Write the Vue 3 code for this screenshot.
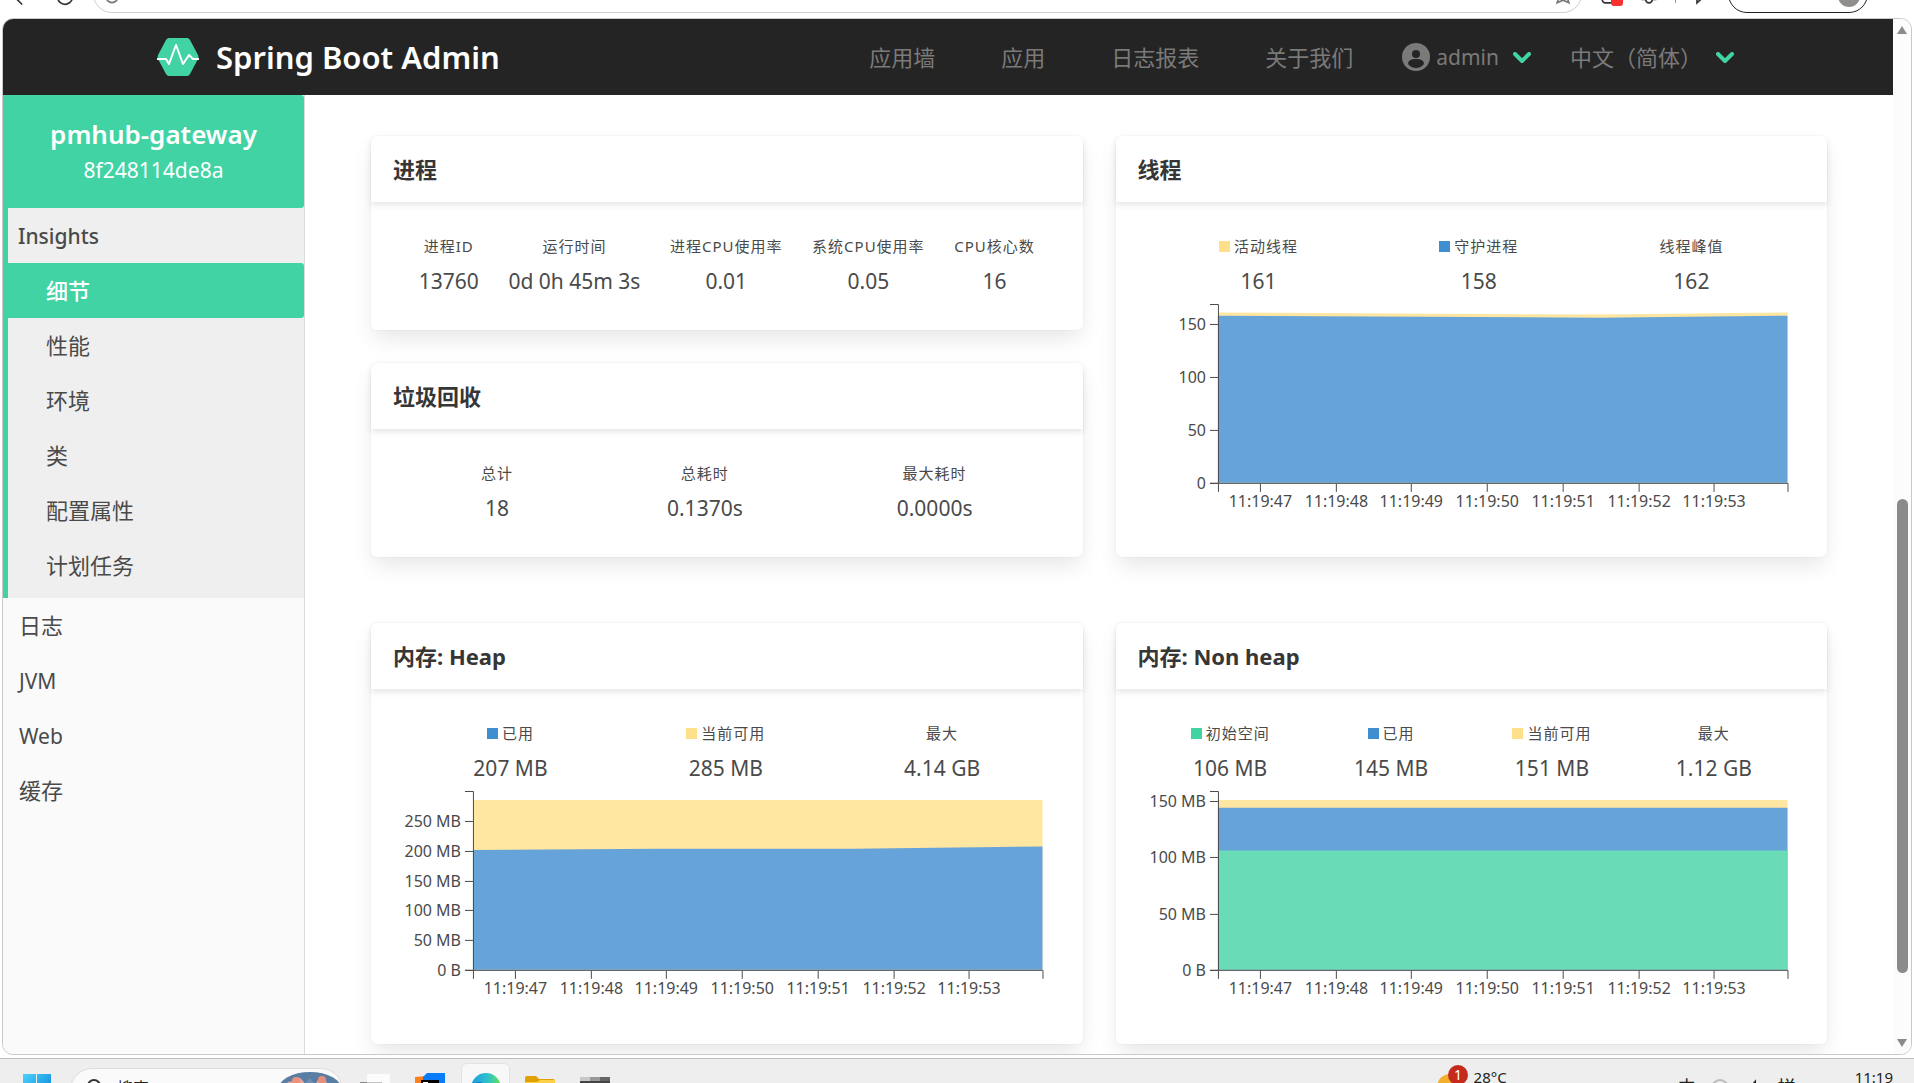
<template>
  <div class="desktop">
    <!-- Browser toolbar -->
    <div class="browser-bar">
      <svg class="bar-icon back" viewBox="0 0 24 24"><path d="M21 12H3M11 3l-9 9 9 9" /></svg>
      <svg class="bar-icon reload" viewBox="0 0 24 24"><path d="M21 6v6a9 9 0 1 1-3-7" /></svg>
      <div class="address">
        <svg class="bar-icon info" viewBox="0 0 24 24"><circle cx="12" cy="13" r="7" /></svg>
        <svg class="bar-icon star" viewBox="0 0 24 24"><path d="M12 2l3 6 6 1-4 5 2 6-7-3-7 3 2-6-4-5 6-1z" /></svg>
      </div>
      <div class="extension">
        <svg class="bar-icon" viewBox="0 0 24 24"><path d="M16 19H9a4 4 0 0 1-4-4V7" /></svg>
        <span class="ext-badge"></span>
      </div>
      <svg class="bar-icon" viewBox="0 0 24 24"><path d="M3 15h5a4 4 0 0 0 8 0h5" /></svg>
      <span class="bar-divider"></span>
      <svg class="bar-icon" viewBox="0 0 24 24"><path d="M6 3v16l10-9" /></svg>
      <div class="profile"><span class="profile-avatar"></span></div>
    </div>

    <div class="window">
      <div class="page">
        <!-- Top navigation -->
        <header class="navbar">
          <a class="brand" href="#">
            <svg class="logo" viewBox="0 0 44 40">
              <path d="M13 1h18q2 0 3 2l8 15q1 2 0 4l-8 15q-1 2-3 2H13q-2 0-3-2L2 22q-1-2 0-4l8-15q1-2 3-2z" fill="#42d3a5" />
              <path d="M1 22h9l3 5 7-19 7 19 6-9 4 4h6" fill="none" stroke="#fff" stroke-width="2" stroke-linejoin="round" />
            </svg>
            <span class="brand-name">Spring Boot Admin</span>
          </a>
          <nav class="nav-links">
            <a v-for="link in navLinks" :key="link" href="#">{{ link }}</a>
          </nav>
          <div class="nav-menus">
            <button class="nav-menu" type="button">
              <svg class="user-icon" viewBox="0 0 28 28">
                <circle cx="14" cy="14" r="14" fill="#7a7a7a" />
                <circle cx="14" cy="11" r="4" fill="#242424" />
                <path d="M6 21q0-5 8-5t8 5q-3 4-8 4t-8-4z" fill="#242424" />
              </svg>
              <span class="user-name">admin</span>
              <svg class="chevron" viewBox="0 0 18 12"><path d="M2 2l7 7 7-7" /></svg>
            </button>
            <button class="nav-menu" type="button">
              <span class="language">中文（简体）</span>
              <svg class="chevron" viewBox="0 0 18 12"><path d="M2 2l7 7 7-7" /></svg>
            </button>
          </div>
        </header>

        <div class="body">
          <!-- Sidebar -->
          <aside class="sidebar">
            <div class="instance">
              <div class="instance-name">pmhub-gateway</div>
              <div class="instance-id">8f248114de8a</div>
            </div>
            <div class="group">
              <a class="item latin strong" href="#">Insights</a>
              <a
                v-for="item in insights"
                :key="item"
                href="#"
                :class="['item', 'sub', { active: item === activeItem }]"
              >{{ item }}</a>
            </div>
            <a
              v-for="item in sections"
              :key="item.name"
              href="#"
              :class="['item', { latin: item.latin }]"
            >{{ item.name }}</a>
          </aside>

          <!-- Detail cards -->
          <main class="content">
            <div class="row">
              <div class="column">
                <section v-for="card in plainCards" :key="card.title" class="card">
                  <h2 class="card-header">{{ card.title }}</h2>
                  <div class="card-body">
                    <dl class="level">
                      <div v-for="stat in card.stats" :key="stat.label" class="stat">
                        <dt>{{ stat.label }}</dt>
                        <dd>{{ stat.value }}</dd>
                      </div>
                    </dl>
                  </div>
                </section>
              </div>
              <div v-for="card in chartCards" :key="card.title" class="column">
                <section class="card">
                  <h2 class="card-header">{{ card.title }}</h2>
                  <div class="card-body">
                    <dl class="level">
                      <div v-for="stat in card.stats" :key="stat.label" class="stat">
                        <dt><span v-if="stat.color" :class="['bullet', stat.color]"></span>{{ stat.label }}</dt>
                        <dd>{{ stat.value }}</dd>
                      </div>
                    </dl>
                    <svg class="chart" viewBox="0 0 646 216">
                      <path
                        v-for="area in card.areas"
                        :key="area.color"
                        :class="['area', area.color]"
                        :d="areaPath(area.values, card.max)"
                      />
                      <path class="axis" d="M61 4.500H69.500V183.500H61" />
                      <path class="axis" d="M69.500 192V183.500H639.500V192" />
                      <g v-for="tick in card.ticks" :key="tick.label">
                        <path class="axis" :d="`M61 ${yPos(tick.value, card.max)}H69`" />
                        <text class="tick" x="57" :y="yPos(tick.value, card.max) + 6" text-anchor="end">{{ tick.label }}</text>
                      </g>
                      <g v-for="(time, index) in times" :key="time">
                        <path class="axis" :d="`M${xPos(index)} 184V192`" />
                        <text class="tick" :x="xPos(index)" y="207" text-anchor="middle">{{ time }}</text>
                      </g>
                    </svg>
                  </div>
                </section>
              </div>
            </div>
          </main>
        </div>
      </div>

      <!-- Page scrollbar -->
      <div class="scrollbar">
        <svg class="scroll-arrow" viewBox="0 0 10 8"><path d="M5 0l5 8H0z" /></svg>
        <div class="track">
          <div :style="{ flexGrow: scroll.before }"></div>
          <div class="thumb" :style="{ flexGrow: scroll.size }"></div>
          <div :style="{ flexGrow: scroll.after }"></div>
        </div>
        <svg class="scroll-arrow" viewBox="0 0 10 8"><path d="M5 8l5-8H0z" /></svg>
      </div>
    </div>

    <!-- Taskbar -->
    <footer class="taskbar">
      <svg class="app start" viewBox="0 0 30 30">
        <defs>
          <linearGradient id="start-fill" x2="1" y2="1">
            <stop offset="0" stop-color="#4cd3fb" />
            <stop offset="1" stop-color="#0078d4" />
          </linearGradient>
        </defs>
        <path d="M1 1h13v13H1zM15 1h14v13H15zM1 15h13v14H1zM15 15h14v14H15z" fill="url(#start-fill)" />
      </svg>
      <div class="search">
        <svg class="search-icon" viewBox="0 0 20 20"><circle cx="9" cy="8" r="6" /><path d="M13 13l5 5" /></svg>
        <span class="search-text">搜索</span>
        <svg class="search-art" viewBox="0 0 64 32">
          <ellipse cx="32" cy="18" rx="32" ry="18" fill="#5a7da3" />
          <path d="M2 16q8-8 14-6 4-8 8-2 4 2 0 8 10-3 14 2-1-10 5-12 6 0 6 8 8-2 13 6v14H2z" fill="#e8a898" />
          <circle cx="18" cy="9" r="4" fill="#e9937c" />
          <circle cx="44" cy="8" r="4" fill="#e58f7a" />
          <path d="M26 12l6-6 8 10-14 2z" fill="#6f8fb0" />
        </svg>
      </div>
      <svg class="app" viewBox="0 0 30 30">
        <path d="M7 1h23v18H7z" fill="#fcfcfc" />
        <path d="M0 9h22v16H0z" fill="#8a8a8a" />
        <path d="M7 9h15v16H7z" fill="#c4c4c4" />
      </svg>
      <svg class="app" viewBox="0 0 30 30">
        <path d="M0 4l11-1-2 26H0z" fill="#fc801d" />
        <path d="M12 0h18v24l-6 6H8V4z" fill="#087cfa" />
        <path d="M6 7h18v18H6z" fill="#000" />
        <path d="M8 10h5M10 10v6M8 16h5M16 10v6h5" stroke="#fff" stroke-width="2" fill="none" />
      </svg>
      <div class="app-active">
        <svg class="app" viewBox="0 0 30 30">
          <defs>
            <linearGradient id="edge-fill" x2="1" y2="0">
              <stop offset="0" stop-color="#1b9de2" />
              <stop offset="0.600" stop-color="#30c3c8" />
              <stop offset="1" stop-color="#6be34a" />
            </linearGradient>
          </defs>
          <circle cx="15" cy="15" r="15" fill="url(#edge-fill)" />
          <path d="M1 14q5-9 14-2v17Q2 29 1 14z" fill="#0c72c4" />
        </svg>
      </div>
      <svg class="app" viewBox="0 0 30 30">
        <path d="M0 5q0-2 2-2h9l3 3h14q2 0 2 2v7H0z" fill="#e0a000" />
        <path d="M0 9h12l3-2h15v20H0z" fill="#fdd04a" />
      </svg>
      <svg class="app" viewBox="0 0 30 30">
        <path d="M0 4h10v5H0z" fill="#c8c8c8" />
        <path d="M10 4h10v5H10z" fill="#999" />
        <path d="M20 4h10v5H20z" fill="#666" />
        <path d="M0 8h30v18H0z" fill="#444" />
      </svg>
      <div class="weather">
        <svg class="weather-icon" viewBox="0 0 32 32">
          <circle cx="13" cy="22" r="13" fill="#f0b02c" />
          <circle cx="21" cy="10" r="10" fill="#c42b1c" />
          <text class="weather-count" x="21" y="15" text-anchor="middle">1</text>
        </svg>
        <span class="clock-text">28°C</span>
      </div>
      <div class="tray">
        <span class="tray-text">中</span>
        <svg class="tray-icon" viewBox="0 0 20 20"><circle cx="10" cy="10" r="8" fill="none" stroke="#bbb" stroke-width="2" /></svg>
        <svg class="tray-icon" viewBox="0 0 20 20"><path d="M7 9l4-5v13" fill="none" stroke="#222" stroke-width="2" /></svg>
        <span class="tray-text">拼</span>
      </div>
      <span class="clock-text">11:19</span>
    </footer>
  </div>
</template>

<script setup>
import { ref } from 'vue';

const navLinks = ['应用墙', '应用', '日志报表', '关于我们'];
const insights = ['细节', '性能', '环境', '类', '配置属性', '计划任务'];
const activeItem = ref('细节');

const sections = [
  { name: '日志' },
  { name: 'JVM', latin: true },
  { name: 'Web', latin: true },
  { name: '缓存' }
];

// Scroll position, as shares of the track
const scroll = { before: 462, size: 472, after: 64 };

const plainCards = [
  {
    title: '进程',
    stats: [
      { label: '进程ID', value: '13760' },
      { label: '运行时间', value: '0d 0h 45m 3s' },
      { label: '进程CPU使用率', value: '0.01' },
      { label: '系统CPU使用率', value: '0.05' },
      { label: 'CPU核心数', value: '16' }
    ]
  },
  {
    title: '垃圾回收',
    stats: [
      { label: '总计', value: '18' },
      { label: '总耗时', value: '0.1370s' },
      { label: '最大耗时', value: '0.0000s' }
    ]
  }
];

const chartCards = [
  {
    title: '线程',
    max: 169,
    stats: [
      { label: '活动线程', value: '161', color: 'yellow' },
      { label: '守护进程', value: '158', color: 'blue' },
      { label: '线程峰值', value: '162' }
    ],
    ticks: [
      { value: 0, label: '0' },
      { value: 50, label: '50' },
      { value: 100, label: '100' },
      { value: 150, label: '150' }
    ],
    areas: [
      { color: 'yellow', values: [[0, 161], [0.67, 159], [1, 161]] },
      { color: 'blue', values: [[0, 158], [0.67, 156], [1, 158]] }
    ]
  },
  {
    title: '内存: Heap',
    max: 300,
    stats: [
      { label: '已用', value: '207 MB', color: 'blue' },
      { label: '当前可用', value: '285 MB', color: 'yellow' },
      { label: '最大', value: '4.14 GB' }
    ],
    ticks: [
      { value: 0, label: '0 B' },
      { value: 50, label: '50 MB' },
      { value: 100, label: '100 MB' },
      { value: 150, label: '150 MB' },
      { value: 200, label: '200 MB' },
      { value: 250, label: '250 MB' }
    ],
    areas: [
      { color: 'yellow', values: [[0, 285], [1, 285]] },
      { color: 'blue', values: [[0, 201], [0.33, 203], [0.67, 203], [1, 207]] }
    ]
  },
  {
    title: '内存: Non heap',
    max: 159,
    stats: [
      { label: '初始空间', value: '106 MB', color: 'green' },
      { label: '已用', value: '145 MB', color: 'blue' },
      { label: '当前可用', value: '151 MB', color: 'yellow' },
      { label: '最大', value: '1.12 GB' }
    ],
    ticks: [
      { value: 0, label: '0 B' },
      { value: 50, label: '50 MB' },
      { value: 100, label: '100 MB' },
      { value: 150, label: '150 MB' }
    ],
    areas: [
      { color: 'yellow', values: [[0, 151], [1, 151]] },
      { color: 'blue', values: [[0, 144], [1, 144]] },
      { color: 'green', values: [[0, 106], [1, 106]] }
    ]
  }
];

const times = [47, 48, 49, 50, 51, 52, 53].map((second) => `11:19:${second}`);

// Plot area inside the chart's view box
const plot = { left: 69, width: 570, bottom: 183, height: 179 };

const yPos = (value, max) => Math.round(plot.bottom - (value / max) * plot.height) + 0.5;
const xPos = (index) => Math.round(111 + index * 75.7) + 0.5;

// Closed area from the baseline up to the given values
const areaPath = (values, max) => {
  const points = values.map(([x, value]) => {
    return `${plot.left + x * plot.width} ${plot.bottom - (value / max) * plot.height}`;
  });
  return `M${plot.left} ${plot.bottom}L${points.join('L')}V${plot.bottom}Z`;
};
</script>

<style>
body {
  background: #fff;
  overflow: hidden;
}
</style>

<style scoped>
* {
  box-sizing: border-box;
}

.desktop {
  height: 100vh;
  display: flex;
  flex-direction: column;
  font-family: "Noto Sans", "Noto Sans CJK SC", sans-serif;
  font-size: 22px;
  color: #4a4a4a;
}

a {
  color: inherit;
  text-decoration: none;
}

button {
  font: inherit;
  color: inherit;
  background: none;
  border: none;
  padding: 0;
}

/* Browser toolbar */
.browser-bar {
  height: 18px;
  flex: none;
  display: flex;
  align-items: flex-end;
  gap: 16px;
  padding: 0 46px 5px 13px;
  overflow: hidden;
}

.bar-icon {
  width: 20px;
  height: 20px;
  flex: none;
  margin-bottom: 6px;
  fill: none;
  stroke: #333;
  stroke-width: 2;
}

.back {
  margin-right: 6px;
}

.reload {
  margin-right: 2px;
}

.address {
  flex: 1;
  height: 38px;
  display: flex;
  align-items: flex-end;
  justify-content: space-between;
  padding: 0 8px;
  border: 1px solid #cfcfcf;
  border-radius: 19px;
}

.address .bar-icon {
  margin-bottom: 6px;
  stroke: #777;
}

.extension {
  display: flex;
  align-items: flex-end;
}

.ext-badge {
  width: 12px;
  height: 14px;
  margin: 0 0 7px -7px;
  border-radius: 3px;
  background: #f8312f;
}

.bar-divider {
  width: 1px;
  height: 20px;
  margin-bottom: 10px;
  background: #999;
}

.profile {
  width: 140px;
  height: 38px;
  flex: none;
  display: flex;
  align-items: flex-end;
  justify-content: flex-end;
  padding: 5px 7px;
  border: 1px solid #222;
  border-radius: 19px;
}

.profile-avatar {
  width: 22px;
  height: 22px;
  border-radius: 50%;
  background: #918d8b;
}

/* Page window */
.window {
  flex: 1;
  min-height: 0;
  display: flex;
  margin: 0 2px 3px;
  border: 1px solid #c9c9c9;
  border-radius: 11px;
  overflow: hidden;
}

.page {
  flex: 1;
  min-width: 0;
  display: flex;
  flex-direction: column;
}

.navbar {
  height: 76px;
  flex: none;
  display: flex;
  align-items: center;
  padding: 0 159px 0 153px;
  background: #242424;
  color: #7a7a7a;
}

.brand {
  display: flex;
  align-items: center;
  gap: 16px;
  margin-right: auto;
  color: #fff;
}

.logo {
  width: 44px;
  height: 40px;
}

.brand-name {
  font-size: 31px;
  font-weight: 600;
}

.nav-links {
  display: flex;
  gap: 66px;
  margin-right: 49px;
  padding-bottom: 3px;
}

.nav-menus {
  display: flex;
  gap: 39px;
}

.nav-menu {
  display: flex;
  align-items: center;
}

.user-icon {
  width: 28px;
  height: 28px;
  margin-right: 6px;
}

.user-name,
.language {
  margin-right: 14px;
}

.user-name {
  font-size: 21px;
}

.language {
  padding-bottom: 3px;
}

.chevron {
  width: 18px;
  height: 12px;
  margin-top: 2px;
  fill: none;
  stroke: #42d3a5;
  stroke-width: 4;
  stroke-linecap: round;
  stroke-linejoin: round;
}

.body {
  flex: 1;
  min-height: 0;
  display: flex;
}

/* Sidebar */
.sidebar {
  width: 302px;
  flex: none;
  background: #fafafa;
  border-right: 1px solid #dbdbdb;
}

.instance {
  height: 113px;
  padding-top: 21px;
  background: #42d3a5;
  border-radius: 0 3px 3px 0;
  color: #fff;
  text-align: center;
  line-height: 36px;
}

.instance-name {
  font-size: 26px;
  font-weight: 600;
}

.instance-id {
  font-size: 21px;
}

.group {
  padding-bottom: 5px;
  border-left: 5px solid #42d3a5;
  background: #efefef;
}

.item {
  display: block;
  height: 55px;
  padding-left: 16px;
  line-height: 54px;
}

.group .item {
  padding-left: 10px;
}

.group .sub {
  padding-left: 38px;
}

.latin {
  font-size: 21px;
  line-height: 57px;
}

.strong {
  font-weight: 500;
}

.active {
  background: #42d3a5;
  border-radius: 0 3px 3px 0;
  color: #fff;
  font-weight: 500;
}

/* Cards */
.content {
  flex: 1;
  min-width: 0;
  padding: 41px 66px 0;
  overflow: hidden;
}

.row {
  display: grid;
  grid-template-columns: 1fr 1fr;
  gap: 66px 33px;
}

.column {
  display: flex;
  flex-direction: column;
  gap: 33px;
  min-width: 0;
}

.card {
  flex: 1;
  background: #fff;
  border-radius: 6px;
  box-shadow: 0 11px 22px -3px rgba(10, 10, 10, 0.1), 0 0 0 1px rgba(10, 10, 10, 0.02);
}

.card-header {
  height: 66px;
  margin: 0;
  padding: 0 22px;
  border-radius: 6px 6px 0 0;
  box-shadow: 0 3px 6px rgba(10, 10, 10, 0.1);
  color: #363636;
  font-size: 22px;
  font-weight: 700;
  line-height: 66px;
}

.card-body {
  padding: 33px 33px 25px;
}

.level {
  display: flex;
  justify-content: space-around;
  margin: 0;
  text-align: center;
}

.stat dt {
  font-size: 15px;
  letter-spacing: 1px;
  line-height: 22px;
}

.stat dd {
  margin: 0;
  font-size: 21px;
  line-height: 48px;
}

.bullet {
  display: inline-block;
  width: 11px;
  height: 11px;
  margin-right: 4px;
}

.bullet.blue {
  background: #3e8ed0;
}

.bullet.yellow {
  background: #ffe08a;
}

.bullet.green {
  background: #42d3a5;
}

.chart {
  display: block;
  width: 100%;
  margin: -5px 0 16px;
}

.area.blue {
  fill: #66a3d9;
}

.area.yellow {
  fill: #ffe6a1;
}

.area.green {
  fill: #69dcb7;
}

.axis {
  fill: none;
  stroke: #4a4a4a;
}

.tick {
  font-size: 16px;
  fill: #4a4a4a;
}

/* Scrollbar */
.scrollbar {
  width: 18px;
  flex: none;
  display: flex;
  flex-direction: column;
  align-items: center;
  gap: 2px;
  padding: 7px 0;
  background: #fcfcfc;
}

.scroll-arrow {
  width: 10px;
  height: 8px;
  fill: #8b8b8b;
}

.track {
  flex: 1;
  display: flex;
  flex-direction: column;
}

.thumb {
  width: 11px;
  border-radius: 6px;
  background: #8b8b8b;
}

/* Taskbar */
.taskbar {
  height: 25px;
  flex: none;
  display: flex;
  align-items: flex-start;
  padding: 0 21px 0 22px;
  border-top: 1px solid #bdbdbd;
  background: #eee;
  color: #222;
  overflow: hidden;
}

.app {
  width: 30px;
  height: 30px;
  flex: none;
  margin: 14px 25px 0 0;
}

.start {
  margin-right: 18px;
}

.search {
  width: 273px;
  height: 44px;
  flex: none;
  display: flex;
  align-items: flex-start;
  margin: 9px 17px 0 0;
  padding-left: 14px;
  border: 1px solid #ddd;
  border-radius: 22px;
  background: #fafafa;
}

.search-icon {
  width: 20px;
  height: 20px;
  margin: 9px 12px 0 0;
  fill: none;
  stroke: #333;
  stroke-width: 2;
}

.search-text {
  margin: 8px auto 0 0;
  font-size: 16px;
  line-height: 22px;
}

.search-art {
  width: 64px;
  height: 32px;
  margin-top: 3px;
}

.app-active {
  width: 49px;
  height: 49px;
  flex: none;
  margin: 4px 15px 0 -9px;
  padding-left: 9px;
  border: 1px solid #e3e3e3;
  border-radius: 6px;
  background: #f8f8f8;
}

.app-active .app {
  margin-top: 9px;
}

.weather {
  display: flex;
  margin: 0 171px 0 auto;
}

.weather-icon {
  width: 32px;
  height: 32px;
  margin: 6px 5px 0 0;
}

.weather-count {
  fill: #fff;
  font-size: 14px;
}

.clock-text {
  padding-top: 7px;
  font-size: 15px;
  line-height: 22px;
}

.tray {
  display: flex;
  align-items: flex-start;
  gap: 14px;
  margin-right: 59px;
  padding-top: 16px;
}

.tray-text {
  font-size: 18px;
  line-height: 24px;
}

.tray-icon {
  width: 20px;
  height: 20px;
  margin-top: 3px;
}
</style>
